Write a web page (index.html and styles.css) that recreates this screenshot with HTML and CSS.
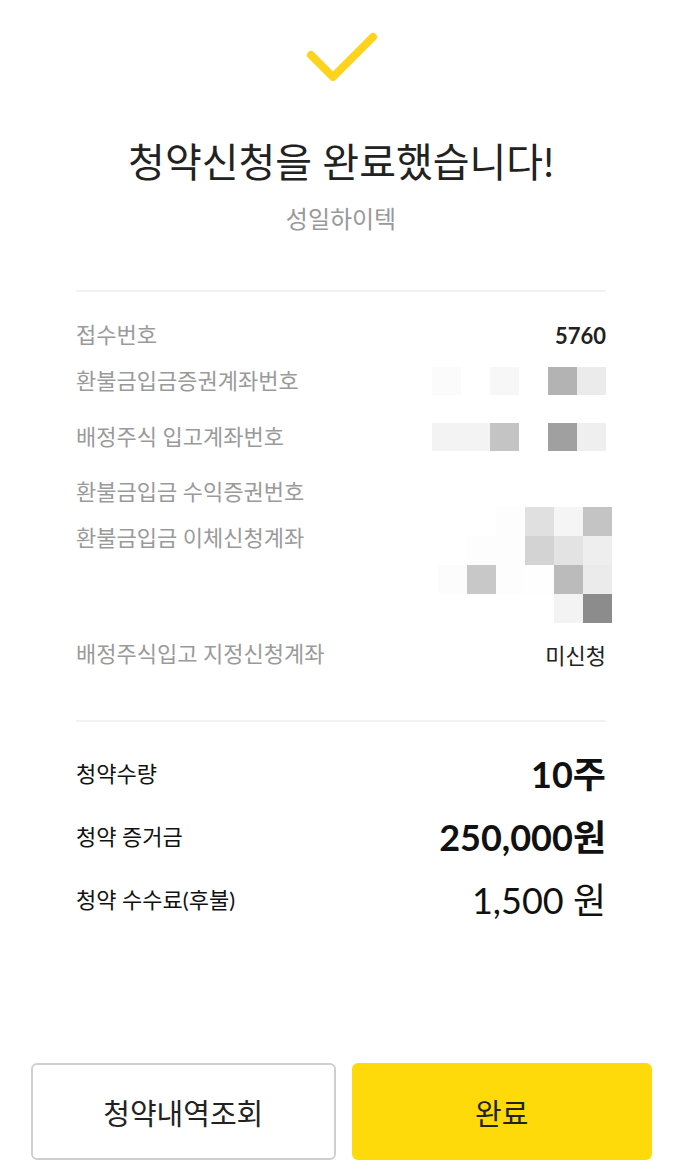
FILE: index.html
```html
<!DOCTYPE html>
<html lang="ko">
<head>
    <meta charset="UTF-8">
    <meta name="viewport" content="width=device-width, initial-scale=1.0">
    <title>청약신청 완료</title>
    <link rel="stylesheet" href="styles.css">
</head>
<body>
    <div class="page">
        <div class="head">
            <svg class="check" width="82" height="58" viewBox="0 0 82 58">
                <path d="M10 27 L32 49 L72 9" fill="none" stroke="#fdd31b" stroke-width="8" stroke-linecap="round" stroke-linejoin="round"/>
            </svg>
            <h1 class="title">청약신청을 완료했습니다!</h1>
            <p class="company">성일하이텍</p>
        </div>

        <div class="section">
            <div class="info-row">
                <span class="label">접수번호</span>
                <span class="value bold">5760</span>
            </div>
            <div class="info-row">
                <span class="label">환불금입금증권계좌번호</span>
                <div class="mosaic-line">
                    <i style="background:#fbfbfb"></i><i></i><i style="background:#f7f7f7"></i><i></i><i style="background:#b3b3b3"></i><i style="background:#ebebeb"></i>
                </div>
            </div>
            <div class="info-row spaced">
                <span class="label">배정주식 입고계좌번호</span>
                <div class="mosaic-line">
                    <i style="background:#f3f3f3"></i><i style="background:#f3f3f3"></i><i style="background:#c4c4c4"></i><i></i><i style="background:#a0a0a0"></i><i style="background:#efefef"></i>
                </div>
            </div>
            <div class="info-group">
                <div class="group-labels">
                    <span class="label">환불금입금 수익증권번호</span>
                    <span class="label">환불금입금 이체신청계좌</span>
                </div>
                <div class="mosaic-block">
                    <i></i><i></i><i style="background:#fdfdfd"></i><i style="background:#e0e0e0"></i><i style="background:#f5f5f5"></i><i style="background:#c4c4c4"></i>
                    <i></i><i style="background:#fdfdfd"></i><i style="background:#fdfdfd"></i><i style="background:#d3d3d3"></i><i style="background:#e3e3e3"></i><i style="background:#eeeeee"></i>
                    <i style="background:#fcfcfc"></i><i style="background:#c8c8c8"></i><i style="background:#fdfdfd"></i><i style="background:#fefefe"></i><i style="background:#bbbbbb"></i><i style="background:#ebebeb"></i>
                    <i></i><i></i><i></i><i></i><i style="background:#f3f3f3"></i><i style="background:#8c8c8c"></i>
                </div>
            </div>
            <div class="info-row last">
                <span class="label">배정주식입고 지정신청계좌</span>
                <span class="value">미신청</span>
            </div>
        </div>

        <div class="section amounts">
            <div class="amount-row">
                <span class="amount-label">청약수량</span>
                <span class="amount bold">10주</span>
            </div>
            <div class="amount-row">
                <span class="amount-label">청약 증거금</span>
                <span class="amount bold">250,000원</span>
            </div>
            <div class="amount-row">
                <span class="amount-label">청약 수수료(후불)</span>
                <span class="amount">1,500 원</span>
            </div>
        </div>

        <div class="actions">
            <button class="btn btn-outline">청약내역조회</button>
            <button class="btn btn-primary">완료</button>
        </div>
    </div>
</body>
</html>
```

FILE: styles.css
```css
* {
    box-sizing: border-box;
}

body {
    margin: 0;
    background-color: #fff;
    font-family: Lato, "Noto Sans CJK KR", sans-serif;
    color: #222;
}

.page {
    display: flex;
    flex-direction: column;
    height: 100vh;
}

.head {
    display: flex;
    flex-direction: column;
    align-items: center;
    padding-top: 28px;
}

.check {
    display: block;
    margin-left: 1px;
}

.title {
    margin: 48px 0 0;
    font-size: 40px;
    font-weight: 400;
    line-height: 56px;
    color: #222;
}

.company {
    margin: 12px 0 0;
    font-size: 24px;
    line-height: 34px;
    color: #999;
}

.section {
    margin: 54px 76px 0;
    border-top: 2px solid #f2f2f2;
}

.info-row {
    display: flex;
    justify-content: space-between;
    align-items: center;
    height: 46px;
}

.info-row:first-child {
    margin-top: 20px;
}

.info-row.spaced {
    margin-top: 10px;
}

.info-row.last {
    margin-top: 8px;
}

.label {
    font-size: 22px;
    color: #9a9a9a;
    line-height: 46px;
}

.value {
    font-size: 22px;
    color: #222;
}

.bold {
    font-weight: 700;
}

.mosaic-line {
    display: grid;
    grid-template-columns: repeat(6, 29px);
    grid-template-rows: 28px;
}

.info-group {
    display: flex;
    justify-content: space-between;
    margin-top: 9px;
}

.group-labels {
    display: flex;
    flex-direction: column;
}

.mosaic-block {
    display: grid;
    grid-template-columns: repeat(6, 29px);
    grid-template-rows: repeat(4, 29px);
    margin-top: 38px;
    margin-right: -6px;
}

.amounts {
    margin-top: 43px;
    padding-top: 18px;
}

.amount-row {
    display: flex;
    justify-content: space-between;
    align-items: center;
    height: 63px;
}

.amount-label {
    font-size: 22px;
    color: #111;
}

.amount {
    font-size: 36px;
    color: #111;
}

.actions {
    display: flex;
    gap: 16px;
    margin-top: auto;
    padding: 0 30px 10px 31px;
}

.btn {
    flex: 1 1 0;
    min-width: 0;
    height: 97px;
    border-radius: 6px;
    font-family: Lato, "Noto Sans CJK KR", sans-serif;
    font-size: 29px;
    color: #222;
    cursor: pointer;
}

.btn-outline {
    background-color: #fff;
    border: 2px solid #cfcfcf;
}

.btn-primary {
    background-color: #ffda0a;
    border: none;
}
```
